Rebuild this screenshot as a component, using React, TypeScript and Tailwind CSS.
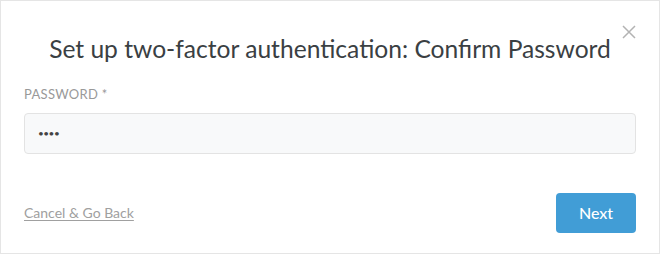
import React from "react";

const App = () => {
  return (
    <div
      className="relative w-[660px] h-[254px] bg-white border border-[#e5e5e5] flex flex-col"
      style={{ fontFamily: "Lato, 'Noto Sans', sans-serif" }}
    >
      <button className="absolute top-[23px] right-[22px] text-[#b3b3b3]">
        <svg width="16" height="16" viewBox="0 0 16 16" fill="none" stroke="currentColor" strokeWidth="1.5">
          <path d="M2 2 L14 14 M14 2 L2 14" />
        </svg>
      </button>
      <div className="pt-[30px] pb-[18px] text-center">
        <h1 className="text-[24.6px] leading-[36px] text-[#3a4043]">
          Set up two-factor authentication: Confirm Password
        </h1>
      </div>
      <div className="px-[23px]">
        <label className="block text-[13px] tracking-[0.3px] text-[#999] uppercase leading-[18px] mb-[10px]">
          Password *
        </label>
        <div className="h-[41px] rounded-[4px] border border-[#e3e3e3] bg-[#f8f9fa] flex items-center px-[13px] text-[#444] text-[10px] tracking-[-0.5px]">
          ••••
        </div>
      </div>
      <div className="flex-1 flex items-end justify-between px-[23px] pb-[20px]">
        <a className="text-[14px] text-[#a0a0a0] underline underline-offset-2 mb-[10px]">Cancel &amp; Go Back</a>
        <button className="w-[80px] h-[40px] rounded-[4px] bg-[#419dd6] text-white text-[16px] font-medium">
          Next
        </button>
      </div>
    </div>
  );
};

export default App;
